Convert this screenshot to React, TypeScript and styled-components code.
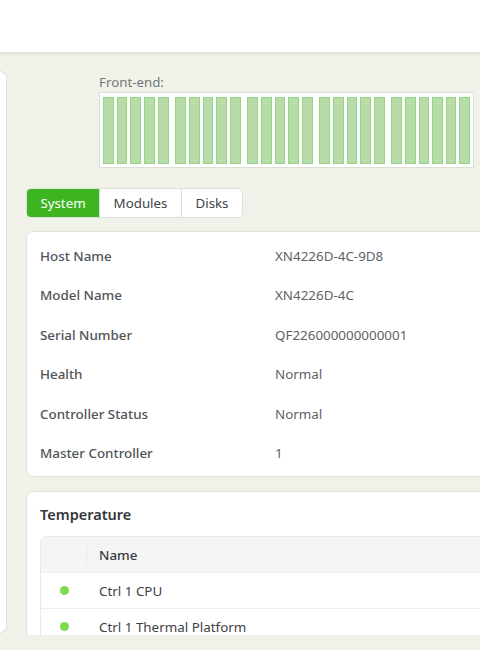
import React from "react";
import styled, { createGlobalStyle } from "styled-components";

const GlobalStyle = createGlobalStyle`
  html, body {
    margin: 0;
    padding: 0;
    overflow: hidden;
    background: #f0f2e9;
    font-family: "Noto Sans", "Open Sans", sans-serif;
  }
`;

const Header = styled.header`
  height: 52px;
  background: #ffffff;
  border-bottom: 1px solid #dfe3d5;
  box-shadow: 0 1px 2px rgba(180, 190, 160, 0.35);
`;

const Main = styled.main`
  display: flex;
  height: 564px;
  padding: 18px 0 15px;
`;

const SidePanel = styled.aside`
  width: 6px;
  flex-shrink: 0;
  margin-bottom: 2px;
  background: #ffffff;
  border: 1px solid #dfe2d9;
  border-left: none;
  border-radius: 0 8px 8px 0;
`;

const Content = styled.section`
  flex: 1;
  min-width: 0;
  margin-left: 19px;
  overflow: hidden;
`;

const FrontEnd = styled.div`
  margin-left: 73px;
  width: 375px;
`;

const FrontLabel = styled.div`
  margin-top: 2px;
  font-size: 13.3px;
  line-height: 19px;
  color: #73777a;
`;

const SlotBox = styled.div`
  display: flex;
  gap: 6.5px;
  height: 67px;
  padding: 4px 3px 3px;
  background: #ffffff;
  border: 1px solid #dcdedb;
`;

const SlotGroup = styled.div<{ $count: number }>`
  display: flex;
  gap: 3px;
  flex: ${(p) => p.$count};
`;

const Slot = styled.div`
  flex: 1;
  background: #b8dca8;
  border: 1px solid #93d683;
  box-sizing: border-box;
`;

const Tabs = styled.div`
  display: inline-flex;
  margin-top: 20px;
  background: #ffffff;
  border: 1px solid #dcdfd8;
  border-radius: 5px;
  overflow: hidden;
`;

const Tab = styled.div<{ $active?: boolean; $width: number }>`
  width: ${(p) => p.$width}px;
  height: 28px;
  display: flex;
  align-items: center;
  justify-content: center;
  font-size: 13.3px;
  color: ${(p) => (p.$active ? "#ffffff" : "#3f4446")};
  background: ${(p) => (p.$active ? "#3cb521" : "#ffffff")};
  & + & {
    border-left: 1px solid #dcdfd8;
  }
`;

const Card = styled.div<{ $top: number }>`
  width: 520px;
  margin-top: ${(p) => p.$top}px;
  background: #ffffff;
  border: 1px solid #e0e3db;
  border-radius: 7px;
`;

const InfoList = styled.div`
  padding: 4px 0 3px;
`;

const InfoRow = styled.div`
  display: flex;
  align-items: center;
  height: 39.5px;
  padding-left: 13px;
  font-size: 13.4px;
`;

const InfoLabel = styled.div`
  width: 235px;
  font-weight: 500;
  color: #4f5458;
`;

const InfoValue = styled.div`
  color: #5f6265;
`;

const CardTitle = styled.h3`
  margin: 0;
  padding: 12px 13px 0;
  font-size: 14.5px;
  line-height: 20px;
  font-weight: 600;
  color: #333638;
`;

const Table = styled.div`
  margin: 12px 0 0 13px;
  border: 1px solid #e7eaea;
  border-right: none;
  border-radius: 8px 0 0 0;
  overflow: hidden;
`;

const TableHead = styled.div`
  display: flex;
  align-items: center;
  height: 35px;
  background: #f4f6f6;
  border-bottom: 1px solid #eceeee;
  font-size: 13.4px;
  font-weight: 500;
  color: #3a3d3f;
`;

const StatusCell = styled.div`
  width: 46px;
  height: 100%;
  display: flex;
  align-items: center;
  justify-content: center;
  position: relative;
`;

const HeadDivider = styled.span`
  position: absolute;
  right: 0;
  top: 8px;
  bottom: 8px;
  width: 1px;
  background: #e8eaea;
`;

const NameCell = styled.div`
  padding-left: 12px;
`;

const TableRow = styled.div`
  display: flex;
  align-items: center;
  height: 35px;
  border-bottom: 1px solid #eceeee;
  font-size: 13.4px;
  color: #3f4244;
`;

const Dot = styled.span`
  width: 9px;
  height: 9px;
  border-radius: 50%;
  background: #7fdb4e;
`;

const groups = [5, 5, 5, 5, 6];

const info = [
  ["Host Name", "XN4226D-4C-9D8"],
  ["Model Name", "XN4226D-4C"],
  ["Serial Number", "QF226000000000001"],
  ["Health", "Normal"],
  ["Controller Status", "Normal"],
  ["Master Controller", "1"],
];

const sensors = ["Ctrl 1 CPU", "Ctrl 1 Thermal Platform"];

export default function App() {
  return (
    <>
      <GlobalStyle />
      <Header />
      <Main>
        <SidePanel />
        <Content>
          <FrontEnd>
            <FrontLabel>Front-end:</FrontLabel>
            <SlotBox>
              {groups.map((n, gi) => (
                <SlotGroup key={gi} $count={n}>
                  {Array.from({ length: n }).map((_, i) => (
                    <Slot key={i} />
                  ))}
                </SlotGroup>
              ))}
            </SlotBox>
          </FrontEnd>

          <Tabs>
            <Tab $active $width={72}>System</Tab>
            <Tab $width={81}>Modules</Tab>
            <Tab $width={60}>Disks</Tab>
          </Tabs>

          <Card $top={13}>
            <InfoList>
              {info.map(([label, value]) => (
                <InfoRow key={label}>
                  <InfoLabel>{label}</InfoLabel>
                  <InfoValue>{value}</InfoValue>
                </InfoRow>
              ))}
            </InfoList>
          </Card>

          <Card $top={14}>
            <CardTitle>Temperature</CardTitle>
            <Table>
              <TableHead>
                <StatusCell>
                  <HeadDivider />
                </StatusCell>
                <NameCell>Name</NameCell>
              </TableHead>
              {sensors.map((s) => (
                <TableRow key={s}>
                  <StatusCell>
                    <Dot />
                  </StatusCell>
                  <NameCell>{s}</NameCell>
                </TableRow>
              ))}
            </Table>
          </Card>
        </Content>
      </Main>
    </>
  );
}
